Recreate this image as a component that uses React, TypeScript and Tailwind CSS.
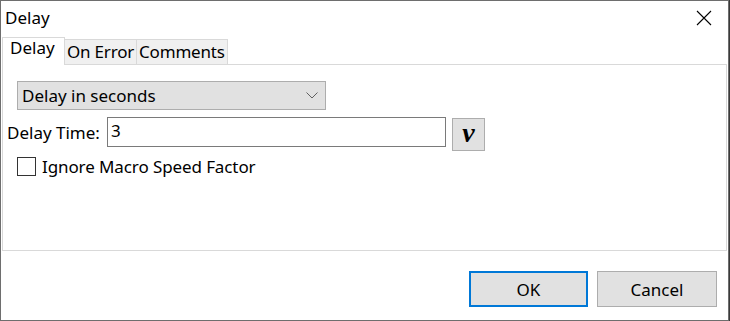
import React from 'react';

const font = { fontFamily: '"Noto Sans", "Liberation Sans", sans-serif' };

const Tab: React.FC<{ label: string; active?: boolean }> = ({ label, active }) =>
  active ? (
    <div className="relative z-10 -mb-px flex h-[28px] w-[63px] items-start border border-b-0 border-[#d9d9d9] bg-white pl-[7px] pt-[1px]">
      {label}
    </div>
  ) : (
    <div className="flex h-[25px] items-center border border-b-0 border-l-0 border-[#d9d9d9] bg-[#f0f0f0] px-[2px] pb-[1px] tracking-[-0.2px]">
      {label}
    </div>
  );

export default function App() {
  return (
    <div className="h-[321px] w-[730px] bg-[#3a3a3a]">
      <div
        className="flex h-[321px] w-[729px] flex-col border border-[#6e6e6e] bg-white text-[17px] leading-none text-black"
        style={font}
      >
        {/* title bar */}
        <div className="flex h-[36px] items-start justify-between">
          <span className="pl-[4px] pt-[8px]">Delay</span>
          <svg width="16" height="16" viewBox="0 0 16 16" className="mr-[16px] mt-[9px]">
            <path d="M1 1 L15 15 M15 1 L1 15" stroke="#000" strokeWidth="1.1" fill="none" />
          </svg>
        </div>

        {/* tabs */}
        <div className="ml-[1px] flex items-end">
          <Tab label="Delay" active />
          <Tab label="On Error" />
          <Tab label="Comments" />
        </div>

        {/* panel */}
        <div className="mx-[1px] flex h-[187px] flex-col border border-[#d9d9d9] bg-white">
          <div className="ml-[14px] mt-[16px] flex h-[29px] w-[309px] items-center justify-between border border-[#adadad] bg-[#e1e1e1] pl-[4px] pr-[7px]">
            <span className="pb-[1px]">Delay in seconds</span>
            <svg width="12" height="7" viewBox="0 0 12 7">
              <path d="M0.5 0.5 L6 6 L11.5 0.5" stroke="#606060" strokeWidth="1" fill="none" />
            </svg>
          </div>

          <div className="ml-[4px] mt-[7px] flex items-start">
            <span className="mt-[7px] w-[100px]">Delay Time:</span>
            <div className="flex h-[30px] w-[339px] items-center border border-[#7a7a7a] bg-white pl-[3px] pb-[3px]">
              3
            </div>
            <button className="ml-[6px] mt-[1px] flex h-[33px] w-[33px] items-center justify-center border border-[#adadad] bg-[#e1e1e1]">
              <span
                className="pb-[3px] text-[28px] font-bold italic leading-none"
                style={{ fontFamily: '"Liberation Serif", serif' }}
              >
                v
              </span>
            </button>
          </div>

          <label className="ml-[14px] mt-[6px] flex items-center">
            <span className="h-[19px] w-[19px] border border-[#333] bg-white" />
            <span className="ml-[6px] pb-[1px] tracking-[-0.1px]">Ignore Macro Speed Factor</span>
          </label>
        </div>

        {/* buttons */}
        <div className="mr-[11px] mt-[20px] flex justify-end gap-[9px]">
          <button className="flex h-[36px] w-[119px] items-center justify-center border-2 border-[#0078d7] bg-[#e1e1e1]">
            OK
          </button>
          <button className="flex h-[36px] w-[120px] items-center justify-center border border-[#adadad] bg-[#e1e1e1]">
            Cancel
          </button>
        </div>
      </div>
    </div>
  );
}
